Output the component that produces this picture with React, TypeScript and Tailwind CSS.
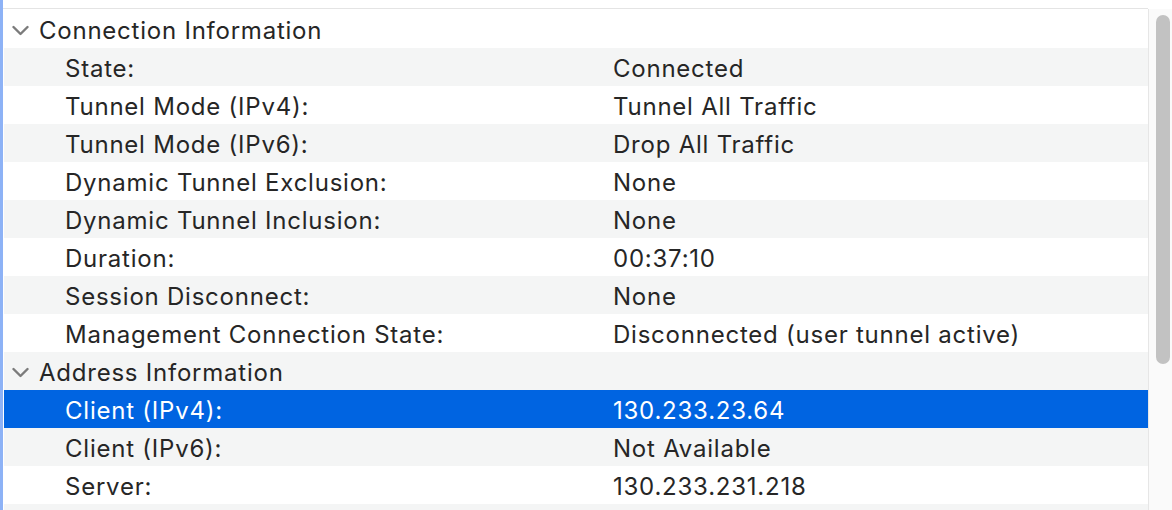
import React from "react";

type Row = { label: string; value: string; selected?: boolean };
type Section = { title: string; rows: Row[] };

const sections: Section[] = [
  {
    title: "Connection Information",
    rows: [
      { label: "State:", value: "Connected" },
      { label: "Tunnel Mode (IPv4):", value: "Tunnel All Traffic" },
      { label: "Tunnel Mode (IPv6):", value: "Drop All Traffic" },
      { label: "Dynamic Tunnel Exclusion:", value: "None" },
      { label: "Dynamic Tunnel Inclusion:", value: "None" },
      { label: "Duration:", value: "00:37:10" },
      { label: "Session Disconnect:", value: "None" },
      { label: "Management Connection State:", value: "Disconnected (user tunnel active)" },
    ],
  },
  {
    title: "Address Information",
    rows: [
      { label: "Client (IPv4):", value: "130.233.23.64", selected: true },
      { label: "Client (IPv6):", value: "Not Available" },
      { label: "Server:", value: "130.233.231.218" },
    ],
  },
];

const Chevron: React.FC = () => (
  <svg width="18" height="12" viewBox="0 0 18 12" className="shrink-0">
    <path d="M1.5 2 L8.5 9 L15.5 2" fill="none" stroke="#7b7b7b" strokeWidth="2.4" strokeLinecap="round" strokeLinejoin="round" />
  </svg>
);

const App: React.FC = () => {
  // flatten so the stripes alternate across sections
  const lines: { kind: "head" | "row"; text: string; value?: string; selected?: boolean }[] = [];
  sections.forEach((s) => {
    lines.push({ kind: "head", text: s.title });
    s.rows.forEach((r) => lines.push({ kind: "row", text: r.label, value: r.value, selected: r.selected }));
  });

  return (
    <div
      className="w-[1172px] h-[510px] overflow-hidden bg-white flex text-[#262626] text-[24px] tracking-[0.032em]"
      style={{ fontFamily: "Inter, 'Liberation Sans', sans-serif" }}
    >
      <div className="w-[3px] h-full bg-[#8db2f6] shrink-0" />
      <div className="flex-1 flex flex-col pt-[8px] pl-[1px]">
        <div className="h-[1px] shrink-0 bg-[#e4e4e4] -ml-[1px]" />
        <div className="h-[1px] shrink-0" />
        {lines.map((l, i) => {
          const stripe = i % 2 === 1 ? "bg-[#f4f5f5]" : "bg-white";
          if (l.kind === "head") {
            return (
              <div key={i} className={`h-[38px] shrink-0 flex items-center pt-[4px] ${stripe}`}>
                <div className="w-[35px] pl-[8px]">
                  <Chevron />
                </div>
                <span>{l.text}</span>
              </div>
            );
          }
          return (
            <div
              key={i}
              className={`h-[38px] shrink-0 flex items-center pt-[4px] ${l.selected ? "bg-[#0064e1] text-white" : stripe}`}
            >
              <span className="w-[609px] pl-[61px] shrink-0">{l.text}</span>
              <span>{l.value}</span>
            </div>
          );
        })}
        <div className="h-[38px] shrink-0 bg-[#f4f5f5]" />
      </div>
      <div className="w-[24px] h-full shrink-0 flex flex-col">
        <div className="h-[9px] shrink-0 bg-white" />
        <div className="flex-1 border-l border-[#e6e6e6] bg-[#fafafa] pl-[7px] pr-[2px] pt-[6px]">
          <div className="w-[14px] h-[349px] rounded-full bg-[#c2c2c2]" />
        </div>
      </div>
    </div>
  );
};

export default App;
